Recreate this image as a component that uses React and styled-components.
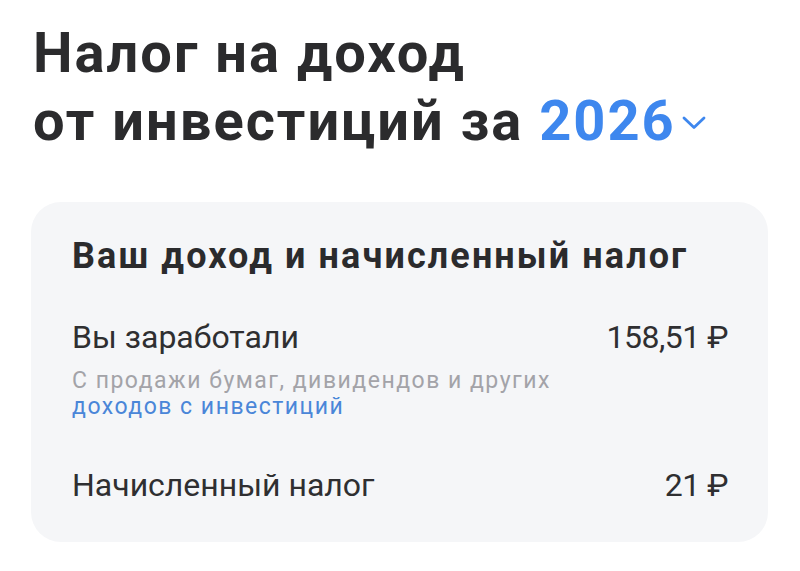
import React from 'react'
import styled, { createGlobalStyle } from 'styled-components'

const GlobalStyle = createGlobalStyle`
    body {
        margin: 0;
        background: #ffffff;
        font-family: Roboto, "Noto Sans", sans-serif;
        color: #2c2c2e;
    }
`

const Chevron = () => (
    <ChevronSvg width="24" height="14" viewBox="0 0 24 14" fill="none">
        <path d="M2 2 L12 11.5 L22 2" stroke="#3e87ee" strokeWidth="2.8" strokeLinecap="round" strokeLinejoin="round" />
    </ChevronSvg>
)

export default function App() {
    return (
        <Page>
            <GlobalStyle />
            <Title>
                Налог на доход
                <br />
                от инвестиций за <Year>2026<Chevron /></Year>
            </Title>

            <Card>
                <CardTitle>Ваш доход и начисленный налог</CardTitle>

                <Row>
                    <Label>Вы заработали</Label>
                    <Value>158,51 ₽</Value>
                </Row>
                <Note>
                    С продажи бумаг, дивидендов и других
                    <br />
                    <Link>доходов с инвестиций</Link>
                </Note>

                <Row $gap={45}>
                    <Label>Начисленный налог</Label>
                    <Value>21 ₽</Value>
                </Row>
            </Card>
        </Page>
    )
}

const Page = styled.div`
    padding: 19px 32px 0 31px;
`

const Title = styled.h1`
    margin: 0;
    padding-left: 2px;
    font-size: 56px;
    line-height: 68px;
    font-weight: 700;
    letter-spacing: 2px;
    color: #2b2b2d;
`

const Year = styled.span`
    color: #3e87ee;
    white-space: nowrap;
`

const ChevronSvg = styled.svg`
    margin-left: 6px;
    vertical-align: 10px;
`

const Card = styled.div`
    margin-top: 47px;
    width: 737px;
    box-sizing: border-box;
    padding: 32px 40px 37px 41px;
    background: #f5f6f8;
    border-radius: 30px;
`

const CardTitle = styled.h2`
    margin: 0;
    font-size: 36px;
    line-height: 44px;
    font-weight: 700;
    letter-spacing: 2.1px;
    color: #2b2b2d;
`

const Row = styled.div`
    display: flex;
    justify-content: space-between;
    align-items: baseline;
    margin-top: ${p => p.$gap || 39}px;
    font-size: 32px;
    line-height: 40px;
    color: #2f2f31;
`

const Label = styled.span``

const Value = styled.span`
    letter-spacing: -0.5px;
`

const Note = styled.p`
    margin: 11px 0 0 0;
    font-size: 23px;
    line-height: 26px;
    letter-spacing: 1.5px;
    color: #a3a3a8;
`

const Link = styled.span`
    color: #4a86d8;
`
